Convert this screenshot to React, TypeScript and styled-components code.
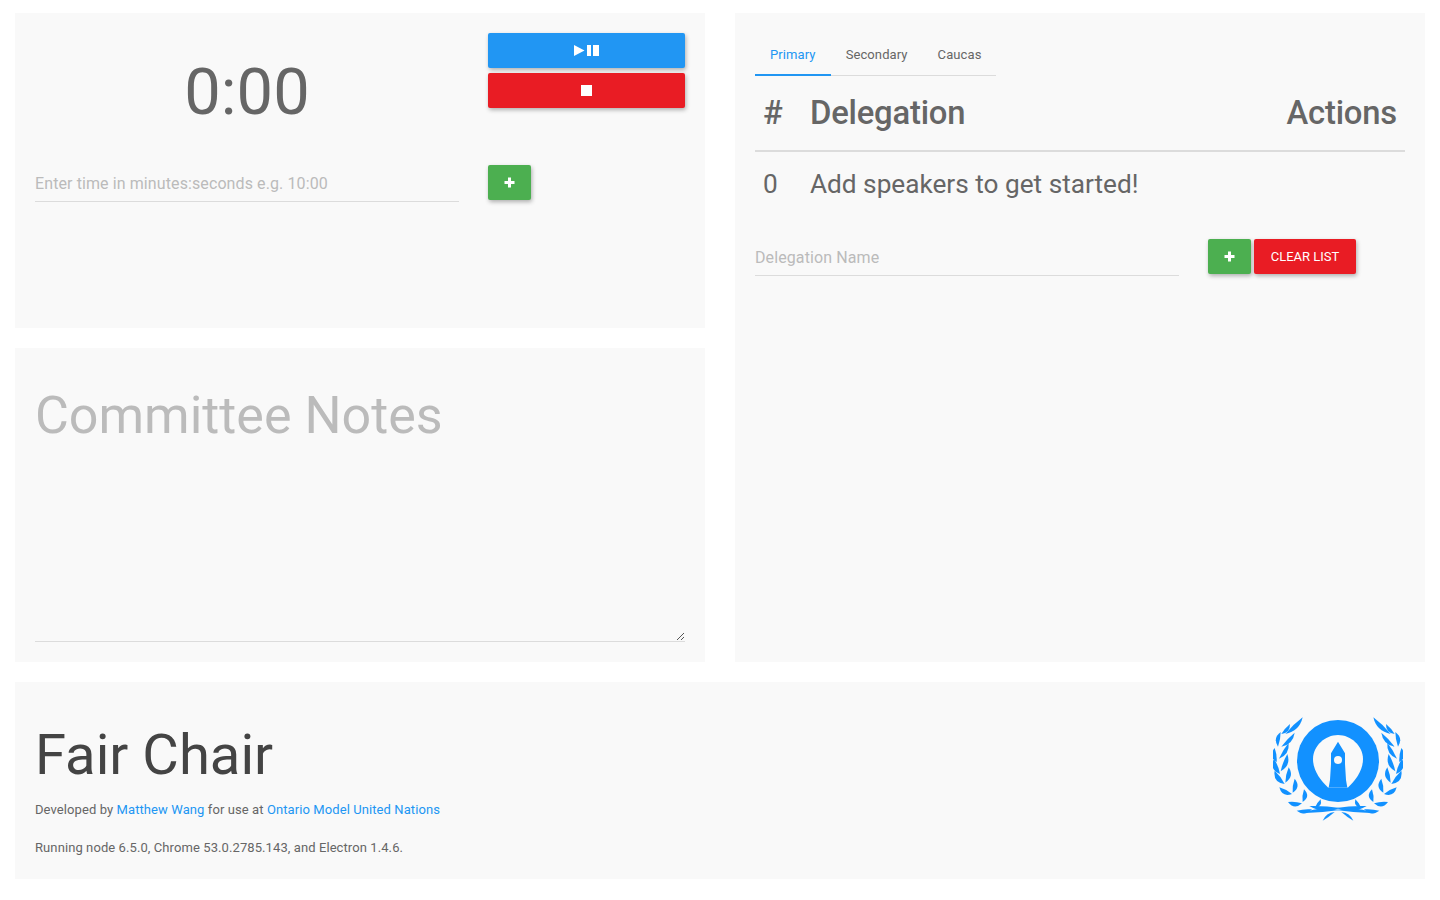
import React from "react";
import styled, { createGlobalStyle } from "styled-components";

const Global = createGlobalStyle`
  html, body { margin: 0; padding: 0; background: #fff; height: 100%; }
  body { font-family: Roboto, "Liberation Sans", sans-serif; color: #666; }
  * { box-sizing: border-box; }
`;

const Page = styled.div`
  width: 1440px;
  height: 900px;
  padding: 13px 15px 0;
  display: flex;
  flex-direction: column;
  gap: 20px;
`;
const Top = styled.div`
  display: grid;
  grid-template-columns: 690px 690px;
  column-gap: 30px;
  height: 649px;
`;
const LeftCol = styled.div`
  display: flex;
  flex-direction: column;
  gap: 20px;
`;
const Panel = styled.section<{ $h?: number }>`
  background: #f9f9f9;
  padding: 20px;
  ${(p) => (p.$h ? `height: ${p.$h}px;` : "")}
`;
const TimerGrid = styled.div`
  display: grid;
  grid-template-columns: 424px 197px;
  column-gap: 29px;
`;
const Clock = styled.div`
  font-size: 65px;
  line-height: 76px;
  height: 132px;
  padding-top: 21px;
  text-align: center;
  color: #666;
`;
const Stack = styled.div`
  display: flex;
  flex-direction: column;
  gap: 5px;
`;
const Btn = styled.button<{ $bg: string; $w?: number }>`
  height: 35px;
  width: ${(p) => (p.$w ? `${p.$w}px` : "100%")};
  background: ${(p) => p.$bg};
  border: 0;
  border-radius: 2px;
  padding: 0;
  color: #fff;
  font: 400 13px/35px Roboto, sans-serif;
  box-shadow: 1px 2px 4px rgba(0, 0, 0, 0.3);
  display: flex;
  align-items: center;
  justify-content: center;
`;
const Field = styled.div`
  height: 37px;
  border-bottom: 1px solid #dcdcdc;
  font-size: 16px;
  letter-spacing: 0.1px;
  line-height: 37px;
  color: #bbb;
`;
const InputRow = styled.div`
  display: grid;
  grid-template-columns: 424px auto;
  column-gap: 29px;
  align-items: start;
`;
const Notes = styled.div`
  height: 274px;
  border-bottom: 1px solid #dcdcdc;
  font-size: 52px;
  line-height: 64px;
  padding-top: 16px;
  color: #bbb;
  position: relative;
`;
const Grip = styled.svg`
  position: absolute;
  right: 0;
  bottom: 0;
`;
const Tabs = styled.div`
  display: flex;
  width: 241px;
  height: 43px;
  border-bottom: 1px solid #dcdcdc;
`;
const Tab = styled.div<{ $on?: boolean }>`
  height: 43px;
  padding: 0 15px;
  font-size: 13px;
  line-height: 44px;
  letter-spacing: 0.1px;
  color: ${(p) => (p.$on ? "#2196f3" : "#666")};
  border-bottom: ${(p) => (p.$on ? "2px solid #2196f3" : "0")};
`;
const TableRow = styled.div<{ $head?: boolean }>`
  display: grid;
  grid-template-columns: 47px 1fr auto;
  padding: 0 8px;
  align-items: center;
  font-size: ${(p) => (p.$head ? "32.8px" : "26.2px")};
  font-weight: ${(p) => (p.$head ? 500 : 400)};
  height: ${(p) => (p.$head ? "76px" : "62px")};
  color: #666;
  ${(p) => (p.$head ? "border-bottom: 2px solid #dcdcdc; letter-spacing: -0.2px; margin-bottom: 1px;" : "")}
`;
const SpeakerInput = styled.div`
  display: grid;
  grid-template-columns: 424px auto;
  margin-top: 24px;
  align-items: start;
`;
const SpeakerBtns = styled.div`
  display: flex;
  gap: 3px;
  margin-left: 29px;
`;
const Footer = styled.footer`
  background: #f9f9f9;
  height: 197px;
  padding: 20px;
  display: flex;
  justify-content: space-between;
  align-items: flex-start;
`;
const Title = styled.h1`
  margin: 0;
  font-size: 56.2px;
  font-weight: 400;
  line-height: 66px;
  padding-top: 20px;
  color: #444;
`;
const Small = styled.p<{ $mt: number }>`
  margin: ${(p) => p.$mt}px 0 0;
  font-size: 13px;
  line-height: 19px;
  letter-spacing: 0.09px;
  color: #666;
`;
const A = styled.a`
  color: #2196f3;
  text-decoration: none;
`;
const LogoWrap = styled.svg`
  margin: 14px 2px 0 0;
  display: block;
`;

const Plus = () => (
  <svg width="11" height="11" viewBox="0 0 11 11">
    <path d="M4 .5h3V4h3.5v3H7v3.5H4V7H.5V4H4z" fill="#fff" />
  </svg>
);

// Left laurel branch: each leaf [stemX, stemY, tipX, tipY, belly], measured in 3x crop pixels.
const leaves: [number, number, number, number, number][] = [
  [52, 66, 104, 16, 9],
  [40, 66, 66, 36, 7],
  [40, 104, 80, 62, 8],
  [30, 104, 38, 60, -8],
  [33, 140, 62, 92, 8],
  [26, 150, 20, 108, -9],
  [38, 178, 58, 126, 9],
  [36, 186, 18, 140, -10],
  [52, 212, 62, 166, 9],
  [50, 216, 20, 176, -10],
  [74, 242, 80, 200, 9],
  [72, 246, 34, 226, -9],
  [104, 270, 108, 232, 9],
  [102, 274, 60, 270, -9],
  [140, 288, 158, 262, 7],
  [132, 292, 86, 296, -8],
  [216, 288, 124, 282, -9],
  [216, 294, 100, 304, 7],
  [200, 300, 164, 326, 5],
];
const leafPath = ([x, y, ex, ey, b]: [number, number, number, number, number]) => {
  const dx = ex - x;
  const dy = ey - y;
  const len = Math.hypot(dx, dy);
  const nx = (-dy / len) * b;
  const ny = (dx / len) * b;
  const mx = (x + ex) / 2;
  const my = (y + ey) / 2;
  return `M${x} ${y}Q${mx + nx * 2.6} ${my + ny * 2.6} ${ex} ${ey}Q${mx - nx * 0.5} ${my - ny * 0.5} ${x} ${y}Z`;
};

const Branch = () => (
  <g transform="translate(-5 -4) scale(0.3333)">
    {leaves.map((l, i) => (
      <path key={i} d={leafPath(l)} fill="#1291ff" />
    ))}
  </g>
);

const Logo = () => (
  <LogoWrap width="130" height="106" viewBox="0 0 130 106">
    <Branch />
    <g transform="matrix(-1 0 0 1 130 0)">
      <Branch />
    </g>
    <circle cx="65" cy="45" r="41" fill="#1291ff" />
    <path
      d="M65 19C52 19 40 30 40 43C40 54 47 64 55 71.5H75C83 64 90 54 90 43C90 30 78 19 65 19Z"
      fill="#f9f9f9"
    />
    <path d="M65 25.7L72 37.3V48L73 64L74.3 71.5H55.7L57 64L58 48V37.3Z" fill="#1291ff" />
    <circle cx="65" cy="44" r="4" fill="#f9f9f9" />
  </LogoWrap>
);

export default function App() {
  return (
    <Page>
      <Global />
      <Top>
        <LeftCol>
          <Panel $h={315}>
            <TimerGrid>
              <Clock>0:00</Clock>
              <Stack>
                <Btn $bg="#2196f3">
                  <svg width="25" height="11" viewBox="0 0 25 11">
                    <path d="M0 0L10.5 5.5L0 11Z" fill="#fff" />
                    <path d="M13 0h4v11h-4zM19 0h6v11h-6z" fill="#fff" />
                  </svg>
                </Btn>
                <Btn $bg="#e91c24">
                  <svg width="11" height="11" viewBox="0 0 11 11">
                    <rect width="11" height="11" fill="#fff" />
                  </svg>
                </Btn>
              </Stack>
            </TimerGrid>
            <InputRow>
              <Field>Enter time in minutes:seconds e.g. 10:00</Field>
              <Btn $bg="#4caf50" $w={43}>
                <Plus />
              </Btn>
            </InputRow>
          </Panel>
          <Panel $h={314}>
            <Notes>
              Committee Notes
              <Grip width="9" height="9" viewBox="0 0 9 9">
                <path d="M1 8L8 1M5 8L8 5" stroke="#555" strokeWidth="1" fill="none" />
              </Grip>
            </Notes>
          </Panel>
        </LeftCol>
        <Panel>
          <Tabs>
            <Tab $on>Primary</Tab>
            <Tab>Secondary</Tab>
            <Tab>Caucas</Tab>
          </Tabs>
          <TableRow $head>
            <span>#</span>
            <span>Delegation</span>
            <span>Actions</span>
          </TableRow>
          <TableRow>
            <span>0</span>
            <span>Add speakers to get started!</span>
            <span />
          </TableRow>
          <SpeakerInput>
            <Field>Delegation Name</Field>
            <SpeakerBtns>
              <Btn $bg="#4caf50" $w={43}>
                <Plus />
              </Btn>
              <Btn $bg="#e91c24" $w={102}>
                CLEAR LIST
              </Btn>
            </SpeakerBtns>
          </SpeakerInput>
        </Panel>
      </Top>
      <Footer>
        <div>
          <Title>Fair Chair</Title>
          <Small $mt={12}>
            Developed by <A>Matthew Wang</A> for use at <A>Ontario Model United Nations</A>
          </Small>
          <Small $mt={19}>Running node 6.5.0, Chrome 53.0.2785.143, and Electron 1.4.6.</Small>
        </div>
        <Logo />
      </Footer>
    </Page>
  );
}
